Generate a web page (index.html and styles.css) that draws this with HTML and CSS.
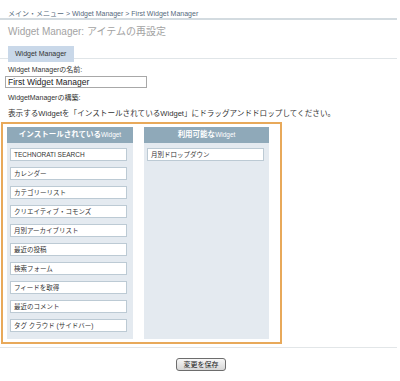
FILE: index.html
```html
<!DOCTYPE html>
<html lang="ja">
<head>
<meta charset="UTF-8" />
<title>Widget Manager: アイテムの再設定</title>
<link rel="stylesheet" href="styles.css">
</head>
<body>

<div class="crumbs">メイン・メニュー &gt; Widget Manager &gt; First Widget Manager</div>
<h1 class="title">Widget Manager: アイテムの再設定</h1>
<div class="tabs"><span class="tab">Widget Manager</span></div>

<form class="editor">
  <label class="field-label" for="wmName">Widget Managerの名前:</label>
  <input type="text" id="wmName" class="name-input" value="First Widget Manager" />
  <div class="field-label second">WidgetManagerの構築:</div>
  <p class="hint">表示するWidgetを「インストールされているWidget」にドラッグアンドドロップしてください。</p>

  <div class="board">
    <div class="column">
      <div class="column-head">インストールされている<span class="latin">Widget</span></div>
      <ul class="widget-list">
        <li>TECHNORATI SEARCH</li>
        <li>カレンダー</li>
        <li>カテゴリーリスト</li>
        <li>クリエイティブ・コモンズ</li>
        <li>月別アーカイブリスト</li>
        <li>最近の投稿</li>
        <li>検索フォーム</li>
        <li>フィードを取得</li>
        <li>最近のコメント</li>
        <li>タグ クラウド (サイドバー)</li>
      </ul>
    </div>
    <div class="column right">
      <div class="column-head">利用可能な<span class="latin">Widget</span></div>
      <ul class="widget-list">
        <li>月別ドロップダウン</li>
      </ul>
    </div>
  </div>

  <div class="actions">
    <button type="button" class="save">変更を保存</button>
  </div>
</form>

</body>
</html>
```

FILE: styles.css
```css
body {
  margin: 0;
  background-color: #fff;
  color: #333;
  font-family: "Liberation Sans", "Noto Sans CJK JP", sans-serif;
}
.crumbs {
  padding: 10px 8px 0;
  height: 8px;
  line-height: 8px;
  font-size: 7px;
  color: #566a7c;
  border-bottom: 2px solid #d3dbe0;
  margin-right: 3px;
}
.title {
  margin: 5px 8px 0;
  font-size: 10px;
  line-height: 14px;
  font-weight: normal;
  color: #a3a3a3;
}
.tabs {
  margin-top: 3px;
  padding-left: 8px;
  height: 16px;
  border-bottom: 1px solid #e0e5e8;
  margin-right: 3px;
}
.tab {
  display: inline-block;
  padding: 0 8px 0 7px;
  height: 16px;
  line-height: 16px;
  font-size: 7px;
  color: #333;
  background-color: #c9d8e9;
}
.editor {
  margin: 0;
}
.field-label {
  display: block;
  margin: 7px 8px 0;
  font-size: 7px;
  line-height: 8px;
  color: #333;
}
.field-label.second {
  margin-top: 6px;
}
.name-input {
  display: block;
  box-sizing: border-box;
  margin: 2px 0 0 5px;
  width: 142px;
  height: 12px;
  padding: 0 2px;
  border: 1px solid #a8a8a8;
  font-family: "Liberation Sans", sans-serif;
  font-size: 8.5px;
  color: #222;
}
.hint {
  margin: 7px 8px 0;
  font-size: 7.6px;
  line-height: 10px;
  color: #333;
}
.board {
  display: flex;
  gap: 11px;
  margin: 3px 0 0 1px;
  width: 273px;
  padding: 3px 0 3px 4px;
  box-sizing: content-box;
  border: 2px solid #e8a95a;
}
.column {
  width: 126px;
  height: 212px;
  background-color: #e4eaf0;
}
.column.right {
  width: 125px;
}
.column-head {
  height: 16px;
  line-height: 16px;
  text-align: center;
  background-color: #8fa9b9;
  color: #fff;
  font-size: 7.5px;
  font-weight: bold;
}
.column-head .latin {
  font-weight: normal;
  font-size: 6.5px;
}
.widget-list {
  list-style: none;
  margin: 0;
  padding: 5px 0 0 3px;
}
.widget-list li {
  box-sizing: border-box;
  width: 117px;
  height: 13px;
  margin-bottom: 6px;
  padding-left: 3px;
  line-height: 11px;
  font-size: 6.5px;
  color: #333;
  background-color: #fff;
  border: 1px solid #bccad4;
}
.actions {
  margin-top: 3px;
  border-top: 1px solid #e2e6e8;
  padding-top: 5px;
  text-align: center;
  margin-right: 3px;
}
.save {
  width: 50px;
  height: 13px;
  padding: 0;
  font-family: "Noto Sans CJK JP", sans-serif;
  font-size: 7px;
  line-height: 11px;
  color: #222;
  border: 1px solid #6d6d6d;
  border-radius: 3px;
  background: linear-gradient(#f7f7f7, #d6d6d6);
  margin-left: 5px;
}
```
